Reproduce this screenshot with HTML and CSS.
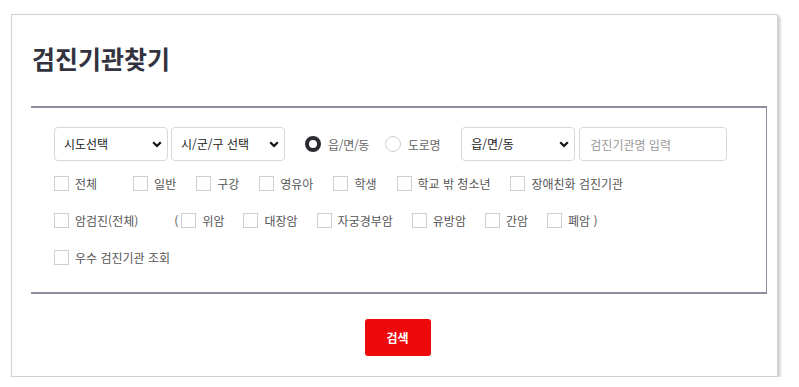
FILE: index.html
```
<!DOCTYPE html>
<html lang="ko">
<head>
<meta charset="utf-8">
<title>검진기관찾기</title>
<link rel="stylesheet" href="styles.css">
</head>
<body>
<div class="card">
  <h1 class="title">검진기관찾기</h1>
  <div class="box">
    <div class="row row-top">
      <div class="select s1"><span>시도선택</span><svg class="chev" width="10" height="7" viewBox="0 0 10 7"><path d="M1.2 1.2 L5 5 L8.8 1.2" fill="none" stroke="#111" stroke-width="2.2"/></svg></div>
      <div class="select s2"><span>시/군/구 선택</span><svg class="chev" width="10" height="7" viewBox="0 0 10 7"><path d="M1.2 1.2 L5 5 L8.8 1.2" fill="none" stroke="#111" stroke-width="2.2"/></svg></div>
      <label class="radio r1"><span class="dot on"></span><span>읍/면/동</span></label>
      <label class="radio r2"><span class="dot"></span><span>도로명</span></label>
      <div class="select s3"><span>읍/면/동</span><svg class="chev" width="10" height="7" viewBox="0 0 10 7"><path d="M1.2 1.2 L5 5 L8.8 1.2" fill="none" stroke="#111" stroke-width="2.2"/></svg></div>
      <div class="input">검진기관명 입력</div>
    </div>
    <div class="row row-chk">
      <label class="chk first"><span class="box-c"></span><span>전체</span></label>
      <label class="chk"><span class="box-c"></span><span>일반</span></label>
      <label class="chk"><span class="box-c"></span><span>구강</span></label>
      <label class="chk"><span class="box-c"></span><span>영유아</span></label>
      <label class="chk"><span class="box-c"></span><span>학생</span></label>
      <label class="chk"><span class="box-c"></span><span>학교 밖 청소년</span></label>
      <label class="chk"><span class="box-c"></span><span>장애친화 검진기관</span></label>
    </div>
    <div class="row row-chk row-cancer">
      <label class="chk cancer"><span class="box-c"></span><span>암검진(전체)</span></label>
      <span class="paren">(</span>
      <label class="chk"><span class="box-c"></span><span>위암</span></label>
      <label class="chk"><span class="box-c"></span><span>대장암</span></label>
      <label class="chk"><span class="box-c"></span><span>자궁경부암</span></label>
      <label class="chk"><span class="box-c"></span><span>유방암</span></label>
      <label class="chk"><span class="box-c"></span><span>간암</span></label>
      <label class="chk"><span class="box-c"></span><span>폐암 )</span></label>
    </div>
    <div class="row row-chk">
      <label class="chk"><span class="box-c"></span><span>우수 검진기관 조회</span></label>
    </div>
  </div>
  <div class="actions">
    <button class="btn" type="button">검색</button>
  </div>
</div>
</body>
</html>
```
FILE: styles.css
```
* { box-sizing: border-box; }
html, body { margin: 0; padding: 0; background: #fff; }
body {
  font-family: "Noto Sans CJK KR", "Noto Sans", sans-serif;
  color: #555;
  font-size: 12px;
}
.card {
  margin: 14px 0 0 11px;
  width: 767px;
  height: 363px;
  border: 1px solid #d2d2d2;
  box-shadow: 2px 2px 3px rgba(0,0,0,0.22);
  background: #fff;
  padding: 0 0 0 19px;
}
.title {
  margin: 28px 0 0 1px;
  font-size: 25px;
  line-height: 30px;
  font-weight: 700;
  color: #333340;
  letter-spacing: 0;
}
.box {
  margin-top: 33px;
  width: 736px;
  height: 188px;
  border-top: 2px solid #8e8ea0;
  border-right: 1px solid #8e8ea0;
  border-bottom: 2px solid #8e8ea0;
  padding: 19px 0 0 23px;
}
.row { display: flex; align-items: center; }
.row-top { height: 34px; }
.select {
  height: 34px;
  width: 114px;
  border: 1px solid #d8d8d8;
  border-radius: 4px;
  display: flex;
  align-items: center;
  justify-content: space-between;
  padding: 0 5px 0 9px;
  color: #222;
  font-size: 12px;
}
.select span { margin-top: -1px; }
.s2 { margin-left: 3px; }
.s3 { margin-left: 21px; }
.chev { display: block; }
.radio { display: flex; align-items: center; color: #666; letter-spacing: -0.3px; }
.r1 { margin-left: 20px; }
.r2 { margin-left: 16px; }
.dot {
  width: 16px; height: 16px;
  border-radius: 50%;
  border: 1px solid #cfcfcf;
  margin-right: 7px;
  background: #fff;
}
.dot.on { border: 4.5px solid #2b2b30; }
.input {
  margin-left: 4px;
  width: 148px;
  height: 34px;
  border: 1px solid #d8d8d8;
  border-radius: 4px;
  display: flex;
  align-items: center;
  padding-left: 10px;
  color: #999;
}
.row-chk { height: 17px; margin-top: 20px; }
.row-chk + .row-chk { margin-top: 20px; }
.row-top + .row-chk { margin-top: 14px; }
.chk { display: flex; align-items: center; margin-right: 20px; color: #555; white-space: nowrap; }
.row-cancer .chk { margin-right: 19px; }
.chk.first { margin-right: 36px; }
.row-cancer .chk.cancer { margin-right: 36px; }
.box-c {
  width: 15px; height: 15px;
  border: 1px solid #cfcfcf;
  margin-right: 6px;
  background: #fff;
}
.paren { margin-right: 3px; color: #555; }
.actions {
  display: flex;
  justify-content: center;
  margin-top: 25px;
  padding-right: 13px;
}
.btn {
  width: 66px;
  height: 37px;
  border: 0;
  border-radius: 3px;
  background: #ee0a0a;
  color: #fff;
  font-family: "Noto Sans CJK KR", "Noto Sans", sans-serif;
  font-size: 12px;
  font-weight: 700;
}
```
